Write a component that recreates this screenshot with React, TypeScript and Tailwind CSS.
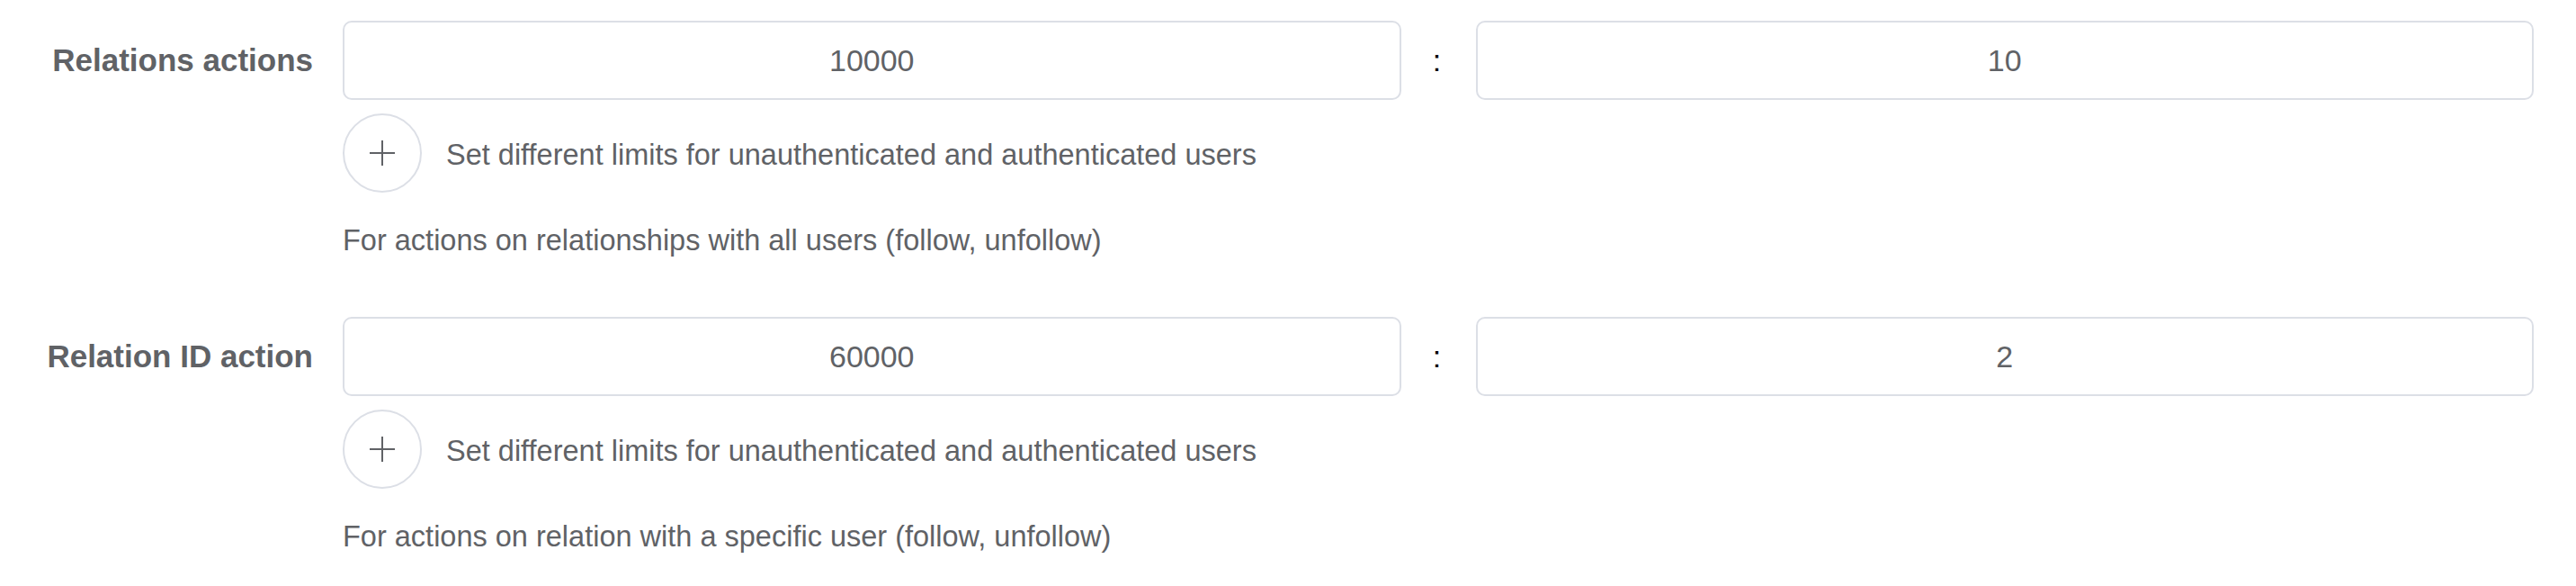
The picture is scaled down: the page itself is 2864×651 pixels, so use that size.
const rows = [
  {
    label: "Relations actions",
    first: "10000",
    second: "10",
    hint: "For actions on relationships with all users (follow, unfollow)",
  },
  {
    label: "Relation ID action",
    first: "60000",
    second: "2",
    hint: "For actions on relation with a specific user (follow, unfollow)",
  },
];

function PlusIcon() {
  return (
    <svg width="28" height="28" viewBox="0 0 28 28" fill="none">
      <path d="M14 0v28M0 14h28" stroke="#606266" strokeWidth="2" />
    </svg>
  );
}

function LimitRow({ label, first, second, hint }: (typeof rows)[number]) {
  return (
    <div className="flex">
      <label className="w-[381px] shrink-0 pr-[33px] text-right text-[35px] font-bold leading-[88px] text-[#606266]">
        {label}
      </label>

      <div className="min-w-0 flex-1">
        <div className="grid grid-cols-[1fr_83px_1fr] items-center">
          <div className="h-[88px] rounded-[10px] border-2 border-[#dcdfe6] bg-white text-center text-[34px] leading-[84px] text-[#606266]">
            {first}
          </div>
          <div className="pr-[3px] text-center text-[34px] leading-[88px] text-black">:</div>
          <div className="h-[88px] rounded-[10px] border-2 border-[#dcdfe6] bg-white text-center text-[34px] leading-[84px] text-[#606266]">
            {second}
          </div>
        </div>

        <div className="mt-[15px] flex items-center gap-[27px]">
          <button className="flex h-[88px] w-[88px] shrink-0 items-center justify-center rounded-full border-2 border-[#dcdfe6] bg-white">
            <PlusIcon />
          </button>
          <span className="mt-[5px] text-[32.5px] text-[#606266]">
            Set different limits for unauthenticated and authenticated users
          </span>
        </div>

        <p className="mt-[31px] text-[32.5px] leading-[44px] text-[#606266]">{hint}</p>
      </div>
    </div>
  );
}

export default function App() {
  return (
    <main className="min-h-screen bg-white pt-[23px] pr-[47px] font-['Liberation_Sans',Arial,sans-serif]">
      <div className="flex flex-col gap-[63px]">
        {rows.map((row) => (
          <LimitRow key={row.label} {...row} />
        ))}
      </div>
    </main>
  );
}
